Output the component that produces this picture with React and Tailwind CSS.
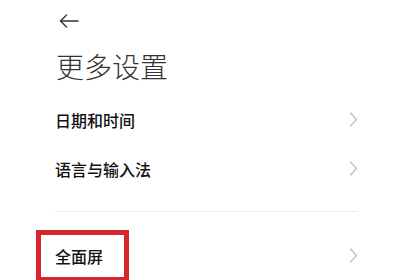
import React from 'react';

const Chevron = () => (
    <svg width="9" height="15" viewBox="0 0 9 15" fill="none" stroke="#bdbdbd" strokeWidth="1.2" strokeLinecap="round" strokeLinejoin="round">
        <polyline points="1.5,1 7.5,7.5 1.5,14" />
    </svg>
);

const Row = ({ label }) => (
    <div className="flex items-center justify-between h-[49px]">
        <span className="text-[16px] font-medium text-[#111]">{label}</span>
        <Chevron />
    </div>
);

export default function App() {
    return (
        <div className="w-[401px] h-[280px] bg-white overflow-hidden" style={{ fontFamily: '"Noto Sans CJK SC", "Noto Sans", sans-serif' }}>
            {/* Header */}
            <div className="h-[42px] flex items-center pl-[59px]">
                <svg width="20" height="14" viewBox="0 0 20 14" fill="none" stroke="#333" strokeWidth="1.4" strokeLinecap="round" strokeLinejoin="round">
                    <line x1="1.5" y1="7" x2="19" y2="7" />
                    <polyline points="7.5,1 1.5,7 7.5,13" />
                </svg>
            </div>

            {/* Title */}
            <h1 className="mt-[10px] pl-[56px] text-[28px] leading-[28px] font-light text-[#333]">更多设置</h1>

            {/* List */}
            <div className="mt-[15px] pl-[55px] pr-[43px]">
                <Row label="日期和时间" />
                <Row label="语言与输入法" />
                <div className="mt-[18px] h-px bg-[#ececec]" />
                <div className="flex items-start justify-between mt-[18px]">
                    <div className="-ml-[19px] w-[93px] h-[52px] border-[5px] border-[#d7262c] flex items-center pl-[14px]">
                        <span className="text-[16px] font-medium text-[#111]">全面屏</span>
                    </div>
                    <div className="h-[50px] flex items-center">
                        <Chevron />
                    </div>
                </div>
            </div>
        </div>
    );
}
